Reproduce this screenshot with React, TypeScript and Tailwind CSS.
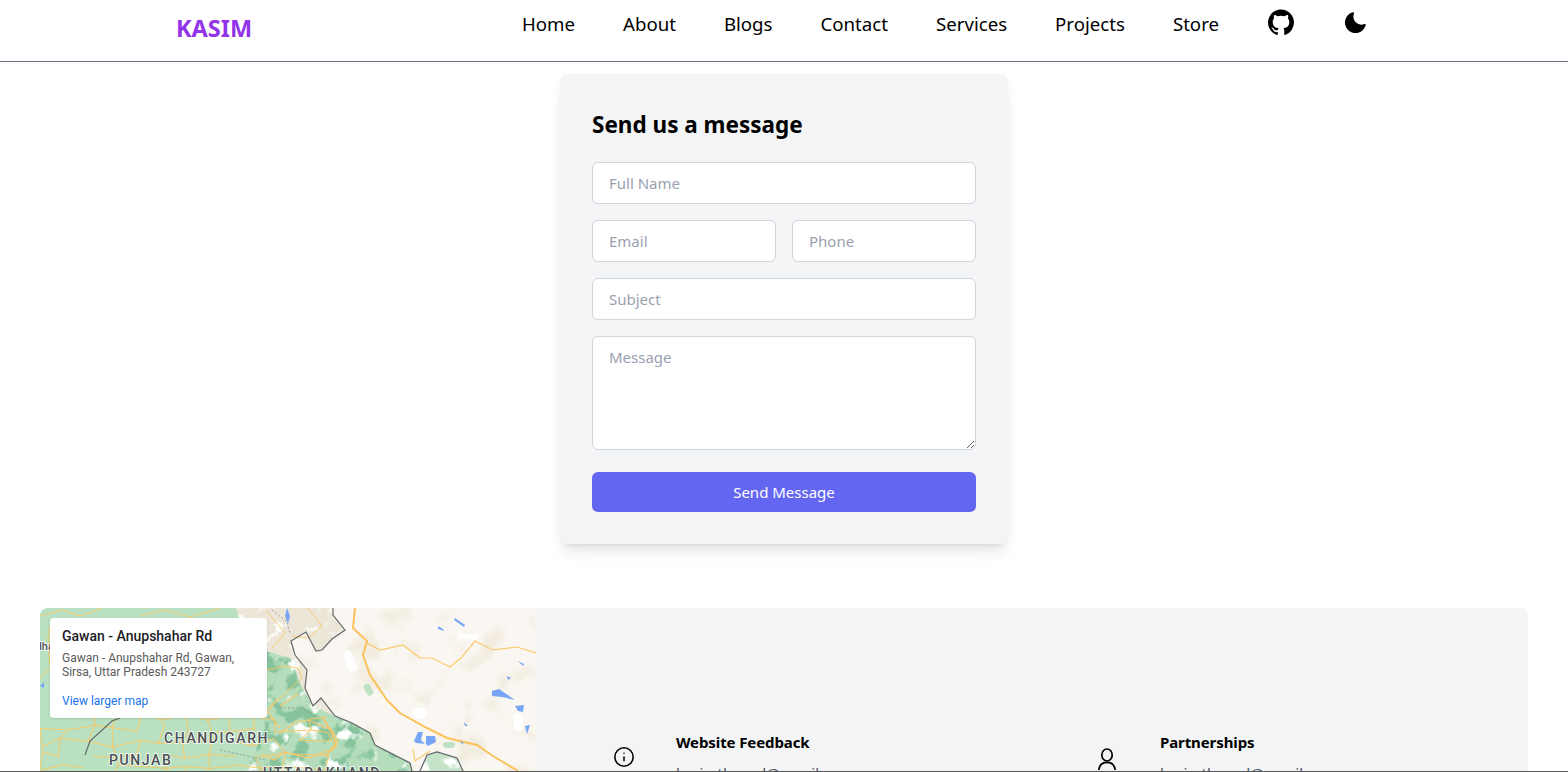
import { Info } from "lucide-react";

const sans = "font-['Noto_Sans','Open_Sans',sans-serif]";
const field =
  "w-full h-[42px] px-4 rounded-md border border-gray-300 bg-white text-[15px] text-gray-900 placeholder:text-gray-400 outline-none";

function Github() {
  return (
    <svg viewBox="0 0 24 24" className="w-[26px] h-[26px]" fill="currentColor">
      <path d="M12 .5C5.37.5 0 5.87 0 12.5c0 5.3 3.44 9.8 8.2 11.39.6.11.82-.26.82-.58v-2.03c-3.34.73-4.04-1.61-4.04-1.61-.55-1.39-1.34-1.76-1.34-1.76-1.09-.74.08-.73.08-.73 1.2.08 1.84 1.24 1.84 1.24 1.07 1.83 2.81 1.3 3.5 1 .11-.78.42-1.31.76-1.61-2.67-.3-5.47-1.33-5.47-5.93 0-1.31.47-2.38 1.24-3.22-.12-.3-.54-1.52.12-3.18 0 0 1.01-.32 3.3 1.23a11.5 11.5 0 0 1 6 0c2.29-1.55 3.3-1.23 3.3-1.23.66 1.66.24 2.88.12 3.18.77.84 1.24 1.91 1.24 3.22 0 4.61-2.81 5.63-5.48 5.92.43.37.81 1.1.81 2.22v3.29c0 .32.22.69.83.58A12 12 0 0 0 24 12.5C24 5.87 18.63.5 12 .5Z" />
    </svg>
  );
}

function Moon() {
  return (
    <svg viewBox="0 0 24 24" className="w-[23px] h-[23px]" fill="currentColor">
      <path d="M10.2 1.6a1 1 0 0 1 .2 1.1 8.4 8.4 0 0 0 10.9 10.9 1 1 0 0 1 1.3 1.3A11 11 0 1 1 9.1 1.4a1 1 0 0 1 1.1.2Z" />
    </svg>
  );
}

function Person() {
  return (
    <svg viewBox="0 0 24 24" className="w-[24px] h-[24px]" fill="none" stroke="currentColor" strokeWidth="1.7">
      <ellipse cx="12" cy="8" rx="5.2" ry="6" />
      <path d="M3.8 23c.5-4.5 3.5-7.6 8.2-7.6s7.7 3.1 8.2 7.6" />
    </svg>
  );
}

function rnd(seed: number) {
  const x = Math.sin(seed * 127.1) * 43758.5453;
  return x - Math.floor(x);
}

function roadNet() {
  const pts: [number, number][][] = [];
  for (let r = 0; r < 6; r++) {
    const row: [number, number][] = [];
    for (let c = 0; c < 13; c++) {
      row.push([c * 24 - 6 + rnd(r * 13 + c) * 14, 104 + r * 13 + rnd(r * 17 + c + 50) * 9]);
    }
    pts.push(row);
  }
  let d = "";
  pts.forEach((row, r) =>
    row.forEach((p, c) => {
      if (c < 12 && rnd(r * 31 + c) > 0.2) d += `M${p[0]} ${p[1]}L${row[c + 1][0]} ${row[c + 1][1]}`;
      if (r < 5 && rnd(r * 37 + c + 9) > 0.3) d += `M${p[0]} ${p[1]}L${pts[r + 1][c][0]} ${pts[r + 1][c][1]}`;
    }),
  );
  return d;
}

function MapArt() {
  return (
    <svg viewBox="0 0 496 164" className="block w-[496px] h-[164px]" preserveAspectRatio="none">
      <defs>
        <filter id="tan" x="0" y="0" width="100%" height="100%" colorInterpolationFilters="sRGB">
          <feTurbulence type="fractalNoise" baseFrequency="0.032" numOctaves="3" seed="7" />
          <feColorMatrix values="0 0 0 0 0.95  0 0 0 0 0.93  0 0 0 0 0.88  6 0 0 0 -3.2" />
          <feGaussianBlur stdDeviation="0.8" />
        </filter>
        <filter id="snow" x="0" y="0" width="100%" height="100%" colorInterpolationFilters="sRGB">
          <feTurbulence type="fractalNoise" baseFrequency="0.06" numOctaves="3" seed="11" />
          <feColorMatrix values="0 0 0 0 1  0 0 0 0 1  0 0 0 0 1  7 0 0 0 -4.2" />
          <feGaussianBlur stdDeviation="0.7" />
        </filter>
        <filter id="deep" x="0" y="0" width="100%" height="100%" colorInterpolationFilters="sRGB">
          <feTurbulence type="fractalNoise" baseFrequency="0.06" numOctaves="3" seed="3" />
          <feColorMatrix values="0 0 0 0 0.53  0 0 0 0 0.77  0 0 0 0 0.62  0 8 0 0 -3.9" />
          <feGaussianBlur stdDeviation="0.6" />
        </filter>
        <clipPath id="mt">
          <path d="M196 0H293L293 7L305 22L292 31L282 42L276 43L266 24L251 33L255 47L267 62L265 80L273 98L281 90L295 108L312 115L330 125L335 137L370 155L372 164H205L225 120L215 60Z" />
        </clipPath>
        <clipPath id="mtLow">
          <path d="M215 40L250 50L262 80L273 98L295 108L312 115L330 125L335 137L370 155L372 164H205L225 120Z" />
        </clipPath>
        <clipPath id="east">
          <path d="M293 0H496V164H372L370 155L335 137L330 125L312 115L295 108L281 90L273 98L265 80L267 62L255 47L251 33L266 24L276 43L282 42L292 31L305 22L293 7Z" />
        </clipPath>
        <clipPath id="tib">
          <path d="M380 164L387 147L397 144L417 150L423 164Z" />
        </clipPath>
      </defs>
      <rect width="496" height="164" fill="#faf7f2" />
      <g clipPath="url(#east)">
        <rect width="496" height="164" filter="url(#tan)" />
      </g>
      <path d="M0 0H200L225 50L262 80L273 98L295 108L312 115L330 125L335 137L370 155L372 164H0Z" fill="#b9e0c0" />
      <g clipPath="url(#mt)">
        <rect width="496" height="164" fill="#ebe6d7" />
        <rect y="36" width="496" height="128" fill="#b5ddbb" clipPath="url(#mtLow)" />
        <g clipPath="url(#mtLow)">
          <rect width="496" height="164" filter="url(#deep)" />
        </g>
        <rect width="496" height="164" filter="url(#snow)" />
      </g>
      <g clipPath="url(#tib)">
        <rect width="496" height="164" fill="#c4e3c8" />
        <rect width="496" height="164" filter="url(#snow)" />
      </g>
      <rect x="325" y="76" width="7" height="12" rx="3" fill="#bfe2c5" transform="rotate(-30 328 82)" />
      <rect x="403" y="134" width="12" height="6" rx="3" fill="#bfe2c5" />
      <rect x="305" y="42" width="9" height="22" rx="4" fill="#ffffff" transform="rotate(-20 310 52)" />
      <rect x="373" y="100" width="13" height="11" rx="5" fill="#ffffff" />
      <rect x="418" y="26" width="20" height="5" rx="2.5" fill="#ffffff" transform="rotate(8 428 28)" />
      <rect x="474" y="106" width="9" height="17" rx="4" fill="#ffffff" />
      <path d={roadNet()} fill="none" stroke="#f8c965" strokeWidth="1" />
      <g fill="none" stroke="#f8c965" strokeWidth="0.9">
        <path d="M0 8L22 2L40 8L62 0M0 70L10 60L8 30L10 18M100 8L125 2L150 9L180 0" />
        <path d="M226 2L245 25L232 40M268 0L282 18L268 30L252 28" />
        <path d="M227 62L245 58L258 60L262 70L240 90L228 100" />
      </g>
      <g fill="none" stroke="#fbca6d" strokeWidth="1.2">
        <path d="M327 35L340 42L363 37L380 50L392 50L410 59L422 49L435 33L453 42L477 39L496 45" />
        <path d="M390 143L375 153L373 141" />
        <path d="M240 125L256 114L268 112L292 122L298 134L290 142L268 150L244 144L234 152L222 146" />
        <path d="M240 98L258 86" />
        <path d="M240 120L228 104L238 90" />
      </g>
      <path d="M315 0L313 20L327 33L323 47L330 67L347 92L360 105L387 120L407 130L437 137L453 148L478 163" fill="none" stroke="#fbc25c" strokeWidth="2" />
      <path d="M283 110L292 125L296 138L285 148" fill="none" stroke="#fbc25c" strokeWidth="1.6" />
      <g fill="none" stroke="#63676b" strokeWidth="1.2">
        <path d="M293 0L293 7L305 22L292 31L282 42L276 43L266 24L251 33L255 47L267 62L265 80L273 98L281 90L295 108L312 115L330 125L335 137L370 155L372 163" />
        <path d="M380 163L387 147L397 144L417 150L423 163" />
        <path d="M45 147L50 133L72 113L80 110" />
      </g>
      <path d="M232 2L247 14L250 26M240 100L262 100L275 108M180 142L225 152" fill="none" stroke="#8a8f8a" strokeWidth="0.8" strokeDasharray="2 2" />
      <g fill="#78a6f5">
        <path d="M245 8L248 16L250 8L247 0Z" />
        <path d="M415 10L425 17L424 19L414 12Z" />
        <path d="M398 18L403 21L404 23L398 21Z" />
        <path d="M452 83L459 81L472 90L475 92L462 89L452 88Z" />
        <path d="M475 98L484 97L483 104L478 103Z" />
        <path d="M485 118L490 117L487 126Z" />
        <path d="M424 114L428 118L425 118Z" />
        <path d="M378 124L383 124L381 132L385 136L376 135L374 133Z" />
        <path d="M386 128H395L396 134L388 138L386 136Z" />
        <path d="M478 53L484 56L483 58Z" />
        <path d="M467 68L471 70L468 72Z" />
        <path d="M419 133L424 135L422 136Z" />
        <path d="M0 78L4 74L4 80Z" />
      </g>
      <g fontFamily="Roboto, sans-serif" fontWeight="500" fill="#4a4f55" stroke="#ffffff" strokeWidth="2" strokeOpacity="0.8" paintOrder="stroke" letterSpacing="1.6">
        <text x="124" y="135" fontSize="14">CHANDIGARH</text>
        <text x="69" y="157" fontSize="14">PUNJAB</text>
        <text x="223" y="170" fontSize="14">UTTARAKHAND</text>
        <text x="-1" y="42" fontSize="11" letterSpacing="0">lha</text>
      </g>
    </svg>
  );
}

export default function App() {
  return (
    <div className={`relative h-[772px] overflow-hidden bg-white text-black ${sans}`}>
      <header className="h-[62px] border-b border-gray-500 flex justify-between pl-[176px] pr-[201px] bg-white">
        <div className="pt-[11px] text-[23.5px] font-bold text-[#9333ea] leading-[34px]">KASIM</div>
        <nav className="flex items-start gap-12 text-[18.65px] leading-[26px] pt-[11px]">
          <a>Home</a>
          <a>About</a>
          <a>Blogs</a>
          <a>Contact</a>
          <a>Services</a>
          <a>Projects</a>
          <a>Store</a>
          <span className="-mt-[2px] ml-px"><Github /></span>
          <span className="ml-[2px]"><Moon /></span>
        </nav>
      </header>

      <main className="flex justify-center pt-3">
        <form className="w-[448px] h-[470px] p-8 rounded-lg bg-gray-100 shadow-lg">
          <h2 className="text-[22.5px] font-bold leading-8 mb-6 pt-[3px] h-8">Send us a message</h2>
          <div className="flex flex-col gap-4">
            <input className={field} placeholder="Full Name" />
            <div className="flex gap-4">
              <input className={field} placeholder="Email" />
              <input className={field} placeholder="Phone" />
            </div>
            <input className={field} placeholder="Subject" />
            <textarea className="block w-full h-[114px] px-4 py-2 rounded-md border border-gray-300 bg-white text-[15px] leading-6 placeholder:text-gray-400 outline-none" placeholder="Message" />
          </div>
          <button type="button" className="mt-[22px] w-full h-10 rounded-md bg-[#6366f1] text-white text-[15px]">
            Send Message
          </button>
        </form>
      </main>

      <section className="mt-16 mx-10 flex h-[400px] rounded-lg overflow-hidden bg-gray-100">
        <div className="relative w-[496px] shrink-0">
          <MapArt />
          <div className="absolute left-[10px] top-[10px] w-[217px] h-[100px] rounded-sm bg-white shadow px-3 pt-[10px] font-['Roboto',sans-serif]">
            <div className="text-sm leading-4 font-medium text-[#202124] truncate">Gawan - Anupshahar Rd</div>
            <div className="mt-[7px] text-xs leading-[14px] text-[#5b5b5b]">Gawan - Anupshahar Rd, Gawan,<br />Sirsa, Uttar Pradesh 243727</div>
            <div className="mt-[15px] text-xs leading-[14px] text-[#1a73e8]">View larger map</div>
          </div>
        </div>
        <div className="grid grid-cols-[482px_1fr] pl-[77px] pt-[123px] items-start flex-1">
          <div className="flex">
            <div className="w-[63px] pt-[15px]"><Info size={22} strokeWidth={1.7} /></div>
            <div>
              <div className="text-[15px] leading-[22px] font-bold tracking-[-0.1px]">Website Feedback</div>
              <div className="mt-[9px] text-[15px] leading-[22px] text-gray-600">kasimthosed@gmail.com</div>
            </div>
          </div>
          <div className="flex">
            <div className="w-[65px] pt-[16px]"><Person /></div>
            <div>
              <div className="text-[15px] leading-[22px] font-bold tracking-[-0.1px]">Partnerships</div>
              <div className="mt-[9px] text-[15px] leading-[22px] text-gray-600">kasimthosed@gmail.com</div>
            </div>
          </div>
        </div>
      </section>
      <div className="absolute left-0 right-0 bottom-0 h-px bg-[#555555]" />
    </div>
  );
}
